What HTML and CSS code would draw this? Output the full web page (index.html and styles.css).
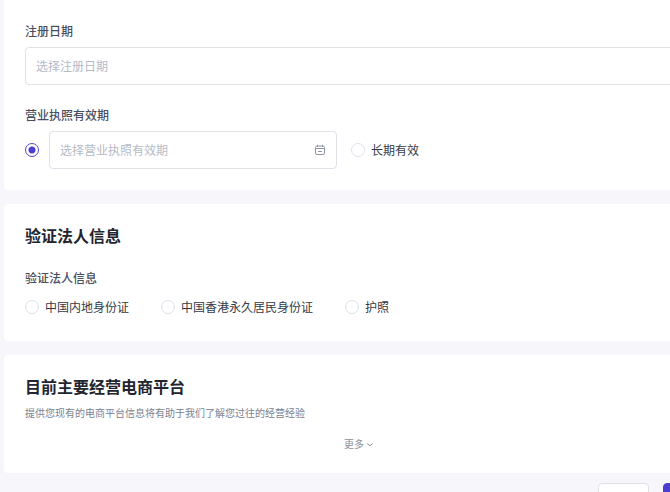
FILE: index.html
```html
<!DOCTYPE html>
<html lang="zh-CN">
<head>
  <meta charset="UTF-8">
  <meta name="viewport" content="width=device-width, initial-scale=1">
  <title>验证法人信息</title>
  <link rel="stylesheet" href="styles.css">
</head>
<body>
  <form class="page">
    <section class="card card-first">
      <div class="field">
        <label class="label" for="regDate">注册日期</label>
        <div class="input-box">
          <input id="regDate" type="text" placeholder="选择注册日期">
        </div>
      </div>
      <div class="field">
        <label class="label" for="licenseDate">营业执照有效期</label>
        <div class="validity">
          <input class="radio" type="radio" name="validity" aria-label="营业执照有效期" checked>
          <div class="input-box input-date">
            <input id="licenseDate" type="text" placeholder="选择营业执照有效期">
            <svg class="icon-calendar" viewBox="0 0 12 12" fill="none" stroke="currentColor" aria-hidden="true">
              <rect x="1.5" y="2" width="9" height="8.5" rx="1.5"/>
              <path d="M1.5 4.5h9M3.5 .8v2M8.5 .8v2M4 7.5h4"/>
            </svg>
          </div>
          <label class="option"><input class="radio" type="radio" name="validity">长期有效</label>
        </div>
      </div>
    </section>

    <section class="card">
      <h2 class="title">验证法人信息</h2>
      <fieldset class="field field-id">
        <legend class="label">验证法人信息</legend>
        <div class="options">
          <label class="option"><input class="radio" type="radio" name="idType">中国内地身份证</label>
          <label class="option"><input class="radio" type="radio" name="idType">中国香港永久居民身份证</label>
          <label class="option"><input class="radio" type="radio" name="idType">护照</label>
        </div>
      </fieldset>
    </section>

    <section class="card">
      <h2 class="title">目前主要经营电商平台</h2>
      <p class="desc">提供您现有的电商平台信息将有助于我们了解您过往的经营经验</p>
      <button class="more" type="button">更多
        <svg class="icon-arrow" viewBox="0 0 8 8" fill="none" stroke="currentColor" aria-hidden="true">
          <path d="M1.2 3.4l2.8 2.4L6.8 3.4"/>
        </svg>
      </button>
    </section>

    <div class="footer">
      <button class="btn" type="button" aria-label="返回"></button>
      <button class="btn btn-primary" type="submit" aria-label="提交"></button>
    </div>
  </form>
</body>
</html>
```

FILE: styles.css
```css
* {
  box-sizing: border-box;
}

body {
  margin: 0;
  height: 100vh;
  overflow: hidden;
  background: #f6f6fb;
  color: #353a48;
  font-family: "Noto Sans CJK SC", sans-serif;
  font-size: 12px;
  line-height: 20px;
}

input,
button {
  font: inherit;
}

/* the form runs on past the right edge of the window */
.page {
  display: flex;
  flex-direction: column;
  margin: 0 -44px 0 4px;
}

.card {
  display: flex;
  flex-direction: column;
  margin-bottom: 14px;
  padding: 21px;
  background: #fff;
  border-radius: 4px;
}

.card-first {
  gap: 20px;
  border-top-left-radius: 0;
}

.card:nth-of-type(3) {
  margin-bottom: 10px;
}

.field {
  min-width: 0;
  margin: 0;
  padding: 0;
  border: 0;
}

.field-id {
  margin-top: 23px;
}

.label {
  display: block;
  margin-bottom: 6px;
  padding: 0;
  color: #4a4f5f;
  font-weight: 500;
}

.input-box {
  display: flex;
  align-items: center;
  height: 38px;
  padding: 0 10px;
  border: 1px solid #dfe2e9;
  border-radius: 4px;
}

.input-box input {
  flex: 1;
  min-width: 0;
  padding: 0;
  border: 0;
  outline: 0;
  background: none;
  color: #353a48;
}

.input-box input::placeholder {
  color: #b4bac7;
  opacity: 1;
}

.input-date {
  width: 288px;
  margin: 0 14px 0 10px;
}

.icon-calendar {
  width: 12px;
  height: 12px;
  color: #8f95a5;
}

.validity {
  display: flex;
  align-items: center;
}

.options {
  display: flex;
  align-items: center;
  gap: 32px;
  min-height: 26px;
}

.option {
  display: flex;
  align-items: center;
  gap: 6px;
}

.radio {
  flex: none;
  width: 14px;
  height: 14px;
  margin: 0;
  appearance: none;
  background: #fff;
  border: 1px solid #dfe2ec;
  border-radius: 50%;
}

.radio:checked {
  border-color: #5549c0;
  background: radial-gradient(circle, #4a3fd0 3px, #fff 4px);
}

.title {
  margin: 0;
  color: #22252f;
  font-size: 16px;
  font-weight: 700;
  line-height: 20px;
}

.desc {
  margin: 8px 0 14px;
  color: #7b8190;
  font-size: 10px;
  line-height: 18px;
}

.more {
  display: flex;
  align-items: center;
  align-self: center;
  gap: 2px;
  padding: 0;
  border: 0;
  background: none;
  color: #8a909f;
  font-size: 10px;
  line-height: 16px;
}

.icon-arrow {
  width: 8px;
  height: 8px;
}

.footer {
  display: flex;
  justify-content: flex-end;
  gap: 14px;
}

.btn {
  width: 51px;
  height: 28px;
  background: #fff;
  border: 1px solid #dfe1ea;
  border-radius: 4px;
}

.btn-primary {
  background: #4a3fd0;
  border-color: #4a3fd0;
}
```
